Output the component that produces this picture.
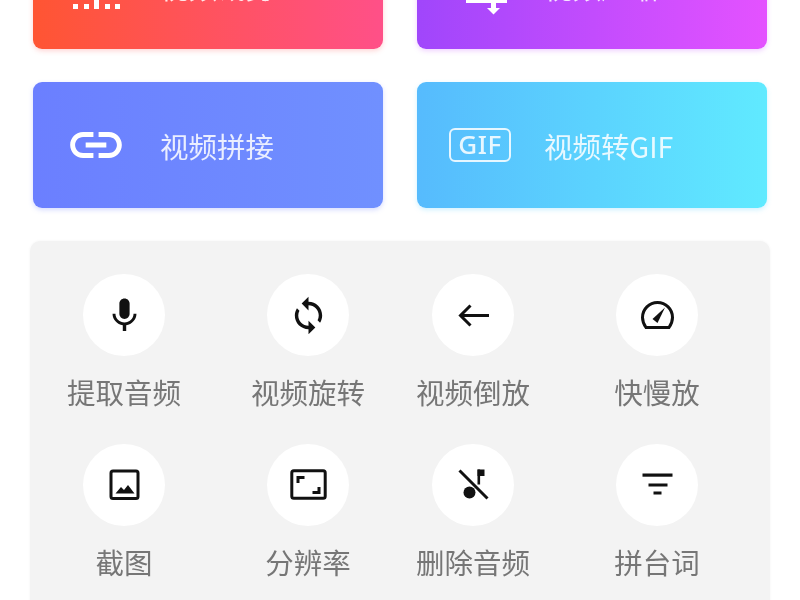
<style>
:global(body) { margin: 0; background: #fff; }
.screen {
  width: 800px;
  height: 600px;
  overflow: hidden;
  font-family: "Noto Sans CJK SC", "Noto Sans", sans-serif;
  filter: blur(0.5px);
}
.cards {
  display: grid;
  grid-template-columns: 350px 350px;
  grid-auto-rows: 126px;
  gap: 33px 34px;
  margin: -77px 0 0 33px;
}
.card {
  display: flex;
  align-items: center;
  gap: 33px;
  padding-left: 32px;
  border-radius: 9px;
  color: rgba(255, 255, 255, 0.86);
  font-size: 28.5px;
  line-height: 40px;
}
.card span { position: relative; top: 1px; }
.red { background: linear-gradient(90deg, #ff5533, #ff5088); box-shadow: 0 2px 5px rgba(255, 90, 90, 0.25); }
.purple { background: linear-gradient(90deg, #a046fb, #e452ff); box-shadow: 0 2px 5px rgba(200, 80, 255, 0.25); }
.blue { background: linear-gradient(90deg, #6b7fff, #7090ff); box-shadow: 0 2px 5px rgba(110, 130, 255, 0.28); }
.cyan { background: linear-gradient(90deg, #56bbfd, #60eaff); box-shadow: 0 2px 5px rgba(90, 210, 255, 0.28); }
.card-icon {
  display: block;
  flex: none;
  width: 62px;
  height: 62px;
  overflow: visible;
  fill: #fff;
}
.gif {
  flex: none;
  box-sizing: border-box;
  width: 62px;
  height: 34px;
  border: 2px solid rgba(255, 255, 255, 0.85);
  border-radius: 6px;
  font-family: "Noto Sans", sans-serif;
  font-size: 26px;
  font-weight: 500;
  line-height: 29px;
  text-align: center;
  letter-spacing: 0.5px;
}
.panel {
  box-sizing: border-box;
  width: 740px;
  margin: 33px 0 0 30px;
  padding: 33px 0 40px 37px;
  background: #f3f3f3;
  border-radius: 10px 10px 0 0;
  box-shadow: 0 0 3px rgba(0, 0, 0, 0.05);
  display: grid;
  grid-template-columns: 184px 165px 184px 114px;
  row-gap: 32px;
}
.tool {
  width: 114px;
  display: flex;
  flex-direction: column;
  align-items: center;
  gap: 16px;
  color: #767676;
  font-size: 28.5px;
  line-height: 40px;
  white-space: nowrap;
}
.disc {
  width: 82px;
  height: 82px;
  border-radius: 50%;
  background: #fff;
  display: flex;
  align-items: center;
  justify-content: center;
}
.disc svg { display: block; width: 41px; height: 41px; overflow: visible; fill: #111; }
.line { fill: none; stroke: #111; stroke-width: 3; }
</style>

<div class="screen">
  <div class="cards">
    <div class="card red">
      <svg class="card-icon" viewBox="0 0 62 62">
        <rect x="8" y="49" width="5" height="5" /><rect x="19" y="49" width="5" height="5" />
        <rect x="29" y="30" width="5" height="24" /><rect x="40" y="49" width="5" height="5" />
        <rect x="50" y="49" width="5" height="5" />
      </svg>
      <span>视频裁剪</span>
    </div>
    <div class="card purple">
      <svg class="card-icon" viewBox="0 0 62 62">
        <rect x="17" y="40" width="41" height="8" />
        <rect x="42" y="48" width="5" height="6" /><path d="M38 53H51L44.500 59.500Z" />
      </svg>
      <span>视频压缩</span>
    </div>
    <div class="card blue">
      <svg class="card-icon" viewBox="0 0 24 24">
        <path d="M3.900 12c0-1.710 1.390-3.100 3.100-3.100h4V7H7c-2.760 0-5 2.240-5 5s2.240 5 5 5h4v-1.900H7c-1.710 0-3.100-1.390-3.100-3.100zM8 13h8v-2H8v2zm9-6h-4v1.900h4c1.710 0 3.100 1.390 3.100 3.100s-1.390 3.100-3.100 3.100h-4V17h4c2.760 0 5-2.240 5-5s-2.240-5-5-5z" />
      </svg>
      <span>视频拼接</span>
    </div>
    <div class="card cyan">
      <div class="gif">GIF</div>
      <span>视频转GIF</span>
    </div>
  </div>

  <div class="panel">
    <div class="tool">
      <div class="disc">
        <svg viewBox="0 0 24 24"><path d="M12 14c1.660 0 2.990-1.340 2.990-3L15 5c0-1.660-1.340-3-3-3S9 3.340 9 5v6c0 1.660 1.340 3 3 3zm5.300-3c0 3-2.540 5.100-5.300 5.100S6.700 14 6.700 11H5c0 3.410 2.720 6.230 6 6.720V21h2v-3.280c3.280-.48 6-3.300 6-6.720h-1.700z" /></svg>
      </div>
      提取音频
    </div>
    <div class="tool">
      <div class="disc">
        <svg viewBox="0 0 24 24"><path d="M12 4V1L8 5l4 4V6c3.310 0 6 2.690 6 6 0 1.010-.25 1.970-.7 2.800l1.460 1.460C19.540 15.030 20 13.570 20 12c0-4.420-3.580-8-8-8zm0 14c-3.310 0-6-2.690-6-6 0-1.010.25-1.970.7-2.800L5.240 7.740C4.460 8.970 4 10.430 4 12c0 4.420 3.580 8 8 8v3l4-4-4-4v3z" /></svg>
      </div>
      视频旋转
    </div>
    <div class="tool">
      <div class="disc">
        <svg viewBox="0 0 41 41"><path class="line" d="M36 20.500H8M17.500 10.500L7.500 20.500L17.500 30.500" /></svg>
      </div>
      视频倒放
    </div>
    <div class="tool">
      <div class="disc">
        <svg viewBox="0 0 41 41">
          <path class="line" d="M9 32.500H32Q35.500 27.500 35.500 22.500A15 15 0 0 0 5.500 22.500Q5.500 27.500 9 32.500Z" />
          <path d="M15.500 24L28 12.500L20.500 28Z" />
        </svg>
      </div>
      快慢放
    </div>
    <div class="tool">
      <div class="disc">
        <svg viewBox="0 0 41 41">
          <rect class="line" x="7" y="6" width="27" height="27.500" rx="2" />
          <path d="M11.500 28.500L17 22L20 25L24 20L30.500 28.500Z" />
        </svg>
      </div>
      截图
    </div>
    <div class="tool">
      <div class="disc">
        <svg viewBox="0 0 41 41">
          <rect class="line" x="3.800" y="5.800" width="33.400" height="27.400" rx="2" />
          <path class="line" d="M10 18V12.500H16.500M31 22V27.500H24.500" />
        </svg>
      </div>
      分辨率
    </div>
    <div class="tool">
      <div class="disc">
        <svg viewBox="0 0 41 41">
          <circle cx="16.500" cy="27.500" r="6" />
          <rect x="24.500" y="4.500" width="2.600" height="15" />
          <rect x="24.500" y="4.500" width="7" height="6.500" />
          <path class="line" d="M6.500 5.500L34.500 33.500" />
        </svg>
      </div>
      删除音频
    </div>
    <div class="tool">
      <div class="disc">
        <svg viewBox="0 0 41 41">
          <rect x="5.500" y="8.500" width="30" height="3.200" />
          <rect x="11.500" y="18.500" width="19" height="3" />
          <rect x="16.500" y="26.500" width="8" height="3" />
        </svg>
      </div>
      拼台词
    </div>
  </div>
</div>
